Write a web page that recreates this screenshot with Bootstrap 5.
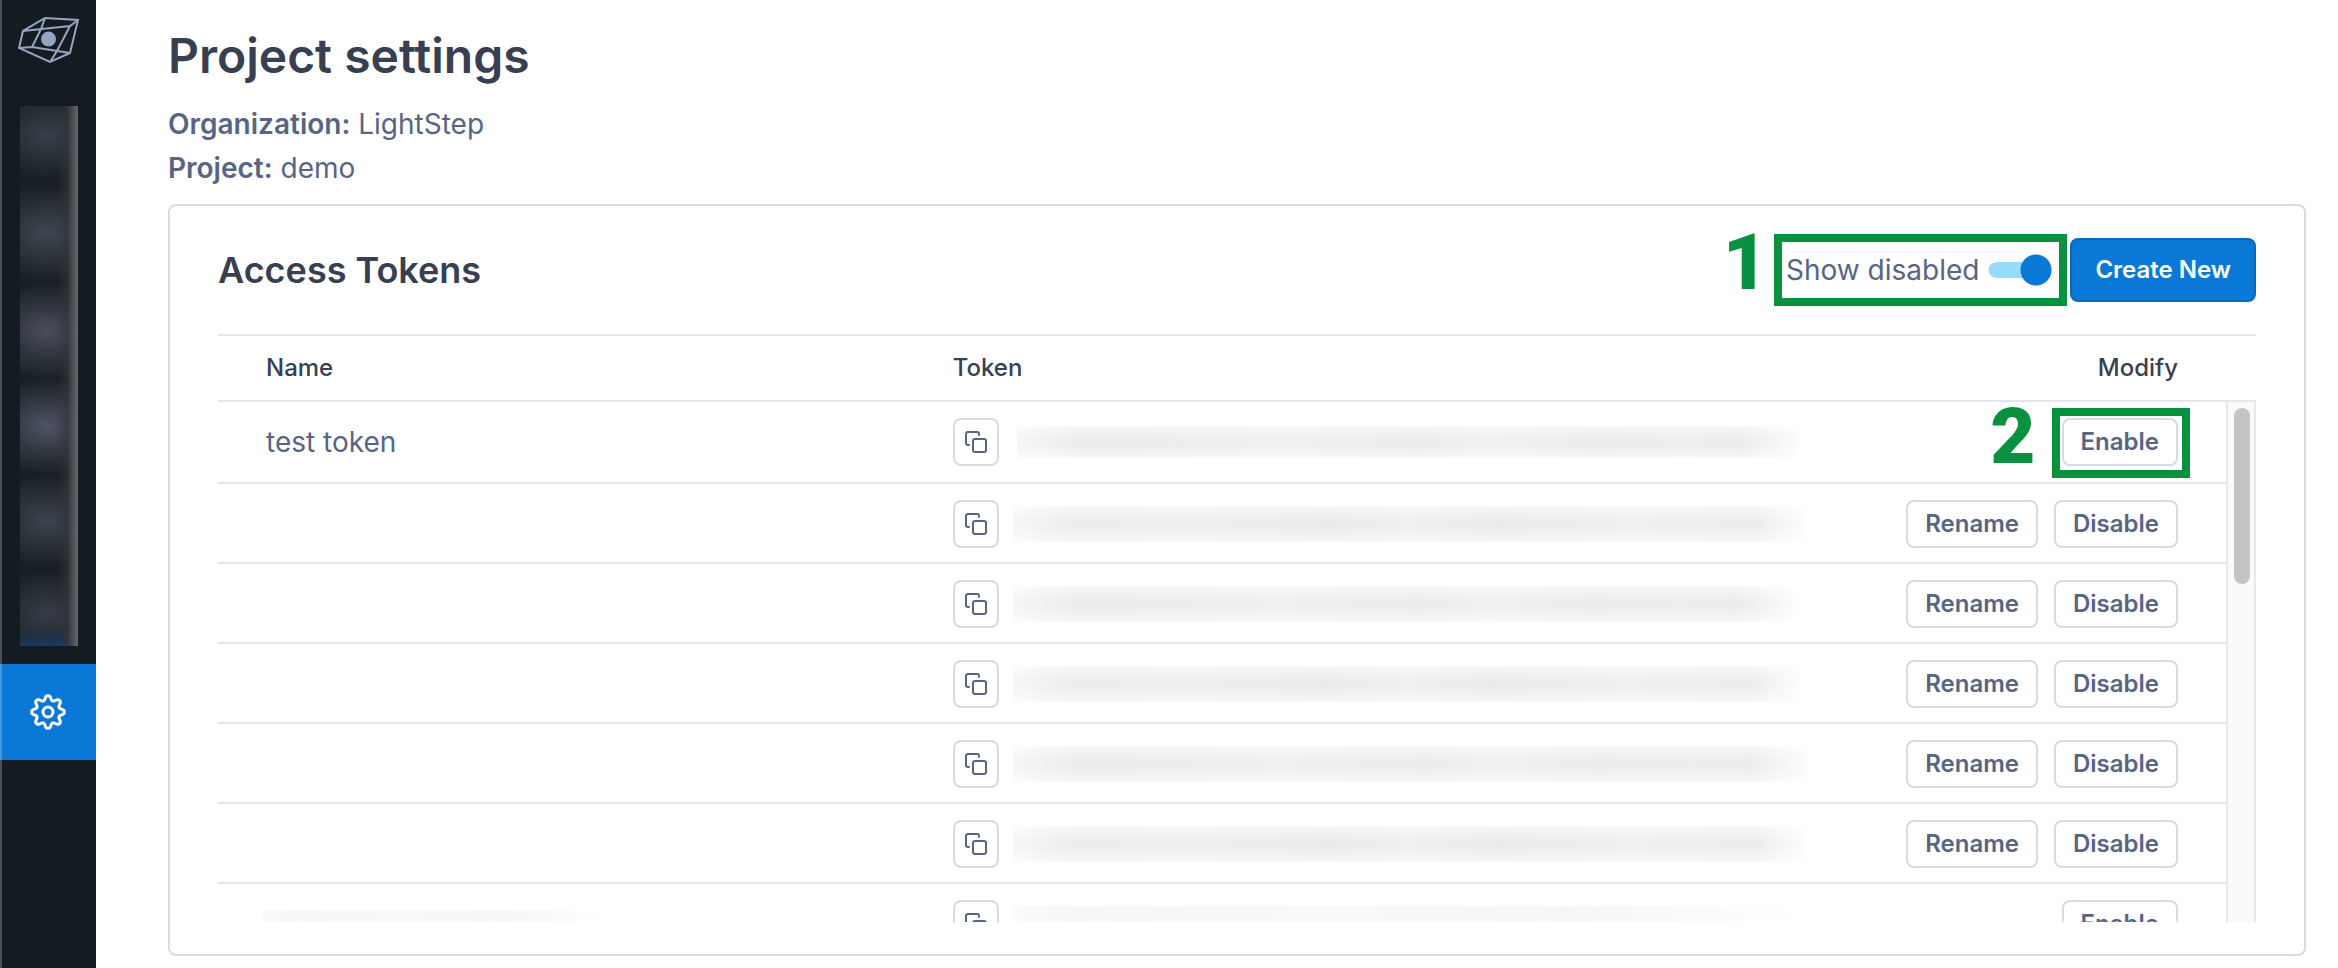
<!DOCTYPE html>
<html lang="en">
<head>
<meta charset="utf-8">
<meta name="viewport" content="width=device-width, initial-scale=1">
<title>Project settings</title>
<link rel="stylesheet" href="https://cdn.jsdelivr.net/npm/bootstrap@5.3.0/dist/css/bootstrap.min.css">
<style>
  :root { --ink: #383f51; --muted: #586485; --line: #e4e4ea; --edge: #d8dbe3; --blue: #0a78d6; --green: #08913f; }
  body { font-family: Inter, sans-serif; font-size: 28px; line-height: 44px; color: var(--muted); background: #fff; }
  a { color: inherit; }
  .side { width: 96px; background: #141c21; border-left: 2px solid #455055; }
  .side-logo { height: 106px; }
  .side-menu { width: 58px; height: 540px; margin-left: 18px;
    background:
      linear-gradient(90deg, transparent 66%, #35373a99 82%, #66686b),
      linear-gradient(0deg, #1c3961, transparent 16px),
      radial-gradient(60px 44px at 46% 29px, #38404a, transparent),
      radial-gradient(70px 48px at 46% 127px, #404752, transparent),
      radial-gradient(70px 48px at 46% 225px, #494e5c, transparent),
      radial-gradient(70px 48px at 46% 320px, #4e5364, transparent),
      radial-gradient(66px 46px at 46% 415px, #3d444f, transparent),
      radial-gradient(60px 42px at 46% 507px, #373d48, transparent),
      #192025; }
  .side-item { height: 96px; margin: 18px 0 0 -2px; background: var(--blue); box-shadow: inset 2px 0 #4496dc; color: #fff; }
  .page { padding: 28px 32px 12px 72px; }
  h1 { font-size: 48px; line-height: 56px; font-weight: 600; color: var(--ink); margin: 0 0 18px; }
  h2 { font-size: 36px; line-height: 44px; font-weight: 600; color: var(--ink); margin: 0; }
  .meta { margin-bottom: 14px; }
  .panel { border: 2px solid var(--edge); border-radius: 8px; padding: 28px 48px 32px; min-height: 0; }
  .panel-head { padding-bottom: 28px; gap: 3px; }
  .toggle { border: 8px solid var(--green); height: 72px; padding: 0 7px 0 4px; gap: 9px; }
  .slide { appearance: none; width: 64px; height: 32px; margin: 0; border-radius: 16px;
    background: radial-gradient(circle at 48px 16px, var(--blue) 15px, transparent 16px),
                linear-gradient(90deg, transparent 8px, #97dcfc 8px) 0 8px / 48px 16px no-repeat,
                radial-gradient(circle at 8px 16px, #97dcfc 7px, transparent 8px); }
  .step { position: absolute; right: 100%; font: 900 78px/78px Roboto, sans-serif; color: var(--green); }
  .step-one { top: -18px; margin-right: 14px; }
  .step-two { top: -20px; margin-right: 26px; }
  .mark-frame { position: absolute; inset: -10px -12px -12px -10px; border: 8px solid var(--green); pointer-events: none; }
  .btn-new { height: 64px; padding: 0 23px; border: 2px solid #0a68bb; border-radius: 8px; background: var(--blue); color: #fff; font-size: 24px; line-height: 32px; font-weight: 600; }
  .btn-line { height: 48px; padding: 0 17px; border: 2px solid var(--edge); border-radius: 8px; background: #fff; color: var(--muted); font-size: 24px; line-height: 32px; font-weight: 600; }
  .btn-copy { width: 46px; padding: 0; flex: none; }
  .rows { overflow: hidden; border-top: 2px solid var(--line); min-height: 0; }
  .grid-table { width: 100%; table-layout: fixed; border-collapse: separate; border-spacing: 0; }
  .grid-table th { height: 66px; padding: 0; border-bottom: 2px solid var(--line); color: var(--ink); font-size: 24px; line-height: 32px; font-weight: 500; }
  .grid-table td { height: 80px; padding: 16px 0 14px; border-bottom: 2px solid var(--line); }
  .grid-table tr.first td { height: 82px; padding-bottom: 16px; }
  .grid-table tr > :first-child { padding-left: 48px; width: 36%; }
  .grid-table tr > :nth-child(2) { padding-left: 1px; }
  .grid-table tr > :last-child { padding-right: 78px; width: 24%; text-align: right; }
  .name { line-height: 32px; }
  .veil { height: 36px; margin-left: 14px; flex: none;
    background: linear-gradient(#fff9, transparent 40%, transparent 60%, #fff9),
      linear-gradient(90deg, #f6f6f7, #ebecee 8%, #ebecee 14%, #eff0f2 34%, #ebecee 52%, #f0f1f3 61%, #ebecee 74%, #edeef0 86%, #ebecee 93%, #fbfbfb); }
  .veil-alt { background: linear-gradient(#fff9, transparent 40%, transparent 60%, #fff9),
      linear-gradient(90deg, #f6f6f7, #ebedef 8%, #eeeff1 22%, #eaebed 40%, #eff0f2 50%, #eaebed 61%, #eff0f2 78%, #ebedef 94%, #fdfdfd); }
  .first .veil { height: 32px; margin-left: 18px; }
  .veil-faint { background: linear-gradient(90deg, #fbfbfb, #f6f6f7 8%, #f9f9fa 40%, #f6f6f7 70%, #fff); }
  .veil-name { width: 343px; height: 28px; margin-left: -4px; }
  .scroller { position: absolute; right: 0; top: 66px; bottom: 0; width: 30px; background: #fafafa; border: solid #e8e8ec; border-width: 0 2px; padding: 6px; }
  .thumb { width: 16px; height: 176px; border-radius: 8px; background: #c4c4c4; }
</style>
</head>
<body>
<div class="d-flex vh-100 overflow-hidden">
  <nav class="side flex-shrink-0" aria-label="Main">
    <a href="#" class="side-logo d-block" aria-label="Home">
      <svg class="d-block" width="94" height="80" viewBox="2 0 94 80" fill="none" stroke="#98a3c0" stroke-width="2">
        <path d="M45 18 78 20 70 53 50 62 19 48 23 31ZM23 31 70 26 78 20M45 18 41 29 32 47M19 48 32 47 70 53M70 26 57 51 50 62"/>
        <circle cx="48.500" cy="39" r="7.500" fill="#98a3c0" stroke="none"/>
      </svg>
    </a>
    <div class="side-menu"></div>
    <a href="#" class="side-item d-flex align-items-center justify-content-center" aria-label="Settings">
      <svg width="40" height="40" viewBox="-20 -20 40 40" fill="none" stroke="#fff" stroke-width="3" stroke-linejoin="round">
        <circle r="5"/>
        <path id="gear"/>
      </svg>
    </a>
  </nav>

  <main class="page d-flex flex-column flex-fill">
    <h1>Project settings</h1>
    <div class="meta">
      <div><strong class="fw-semibold">Organization:</strong> LightStep</div>
      <div><strong class="fw-semibold">Project:</strong> demo</div>
    </div>
    <section class="panel d-flex flex-column flex-fill">
      <div class="panel-head d-flex align-items-center">
        <h2 class="me-auto">Access Tokens</h2>
        <div class="toggle position-relative d-flex align-items-center">
          <span class="step step-one">1</span>
          <label for="show">Show disabled</label>
          <input class="slide" id="show" type="checkbox" role="switch" checked>
        </div>
        <button type="button" class="btn-new">Create New</button>
      </div>
      <div class="position-relative d-flex flex-column flex-fill rows">
        <table class="grid-table">
          <thead><tr><th>Name</th><th>Token</th><th>Modify</th></tr></thead>
          <tbody id="tokens"></tbody>
        </table>
        <div class="scroller"><div class="thumb"></div></div>
      </div>
    </section>
  </main>
</div>

<script src="https://cdn.jsdelivr.net/npm/bootstrap@5.3.0/dist/js/bootstrap.bundle.min.js"></script>
<script>
  const copy = `<button type="button" class="btn-line btn-copy d-flex align-items-center justify-content-center" aria-label="Copy token">
    <svg width="24" height="24" viewBox="0 0 24 24" fill="none" stroke="#586485" stroke-width="2" stroke-linecap="round" stroke-linejoin="round">
      <rect x="9" y="9" width="13" height="13" rx="2"/><path d="M5 15H4a2 2 0 0 1-2-2V4a2 2 0 0 1 2-2h9a2 2 0 0 1 2 2v1"/></svg></button>`;
  const rows = [
    { name: 'test token', width: 780, off: true, step: true },
    { width: 792 }, { width: 780 }, { width: 786 }, { width: 792 }, { width: 792 },
    { veiled: true, width: 792, off: true }
  ];
  const button = t => `<button type="button" class="btn-line">${t}</button>`;
  document.getElementById('tokens').innerHTML = rows.map((r, i) => `
    <tr class="${i ? '' : 'first'}">
      <td class="name">${r.name || (r.veiled ? '<div class="veil veil-faint veil-name"></div>' : '')}</td>
      <td><div class="d-flex align-items-center">${copy}
        <div class="veil ${i % 2 ? 'veil-alt' : ''} ${r.veiled ? 'veil-faint' : ''}" style="width:${r.width}px"></div></div></td>
      <td><div class="d-flex justify-content-end gap-3">${r.step
        ? `<span class="position-relative d-flex"><span class="step step-two">2</span>${button('Enable')}<span class="mark-frame"></span></span>`
        : r.off ? button('Enable') : button('Rename') + button('Disable')}</div></td>
    </tr>`).join('');

  // Eight-lobed cog outline: a circle whose radius swings between 12 and 16.4.
  const pts = [];
  for (let a = 0; a < 360; a += 3) {
    const t = a * Math.PI / 180, c = Math.cos(8 * t), r = 14.2 + 2.2 * Math.sign(c) * Math.pow(Math.abs(c), .7);
    pts.push((r * Math.cos(t)).toFixed(2) + ' ' + (r * Math.sin(t)).toFixed(2));
  }
  document.getElementById('gear').setAttribute('d', 'M' + pts.join('L') + 'Z');
</script>
</body>
</html>
